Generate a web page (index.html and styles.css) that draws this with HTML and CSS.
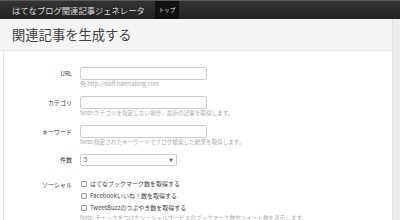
FILE: index.html
```html
<!DOCTYPE html>
<html lang="ja">
  <head>
    <meta charset="UTF-8" />
    <title>はてなブログ関連記事ジェネレータ</title>
    <link rel="stylesheet" href="styles.css">
  </head>
  <body>
    <div class="navbar">
      <a href="#" class="brand">はてなブログ関連記事ジェネレータ</a>
      <a href="#" class="nav-item active">トップ</a>
    </div>
    <div class="page">
      <div class="page-header">
        <h1>関連記事を生成する</h1>
      </div>
      <div class="content">
        <form class="form">
          <div class="form-row">
            <label class="form-label">URL</label>
            <div class="controls">
              <input type="text" class="text-input" />
              <p class="help">例:http://staff.hatenablog.com</p>
            </div>
          </div>
          <div class="form-row">
            <label class="form-label">カテゴリ</label>
            <div class="controls">
              <input type="text" class="text-input" />
              <p class="help">Note:カテゴリを指定しない場合、最新の記事を取得します。</p>
            </div>
          </div>
          <div class="form-row">
            <label class="form-label">キーワード</label>
            <div class="controls">
              <input type="text" class="text-input" />
              <p class="help">Note:指定されたキーワードでブログ検索した結果を取得します。</p>
            </div>
          </div>
          <div class="form-row row-select">
            <label class="form-label">件数</label>
            <div class="controls">
              <div class="select-wrap">
                <select class="select">
                  <option>5</option>
                  <option>10</option>
                </select>
                <span class="caret">▼</span>
              </div>
            </div>
          </div>
          <div class="form-row">
            <label class="form-label">ソーシャル</label>
            <div class="controls">
              <label class="check"><input type="checkbox" />はてなブックマーク数を取得する</label>
              <label class="check"><input type="checkbox" />Facebookいいね！数を取得する</label>
              <label class="check"><input type="checkbox" />TweetBuzzのつぶやき数を取得する</label>
              <p class="help">Note: チェックをつけたソーシャルサービスのブックマーク数やツイート数を表示します。</p>
            </div>
          </div>
        </form>
      </div>
    </div>
  </body>
</html>
```

FILE: styles.css
```css
body {
  margin: 0;
  font-family: "Noto Sans CJK JP", "Liberation Sans", sans-serif;
  color: #333;
  background-color: #eeeeee;
  overflow: hidden;
}
.navbar {
  display: flex;
  align-items: stretch;
  height: 19px;
  background: linear-gradient(#333, #222);
  border-top: 1px solid #5a5a5a;
  box-sizing: border-box;
  padding-left: 12px;
}
.brand {
  color: #ddd;
  text-decoration: none;
  font-size: 8.3px;
  line-height: 18px;
  margin-right: 10px;
}
.nav-item {
  color: #eee;
  text-decoration: none;
  font-size: 5.5px;
  line-height: 18px;
  padding: 0 4px;
}
.nav-item.active {
  background-color: #111;
}
.page {
  margin-right: 7px;
  background-color: #fff;
  border-right: 1px solid #e3e3e3;
  height: 201px;
}
.page-header {
  background-color: #f5f5f5;
  border-bottom: 1px solid #e6e6e6;
  height: 31px;
  padding-left: 12px;
  display: flex;
  align-items: center;
}
h1 {
  margin: 0;
  font-size: 13.3px;
  font-weight: normal;
  color: #404040;
}
.content {
  margin-left: 3px;
  border-left: 1px solid #e8e8e8;
  padding-top: 16px;
  height: 200px;
}
.form {
  display: flex;
  flex-direction: column;
  gap: 7px;
}
.form-row {
  display: grid;
  grid-template-columns: 68px 1fr;
  column-gap: 8px;
  align-items: start;
}
.form-label {
  text-align: right;
  font-size: 6px;
  line-height: 13px;
  color: #333;
}
.controls {
  display: flex;
  flex-direction: column;
}
.text-input {
  display: block;
  width: 127px;
  height: 13px;
  box-sizing: border-box;
  border: 1px solid #ccc;
  border-radius: 2px;
  margin: 0;
  padding: 0 3px;
}
.help {
  margin: 0;
  font-size: 5.6px;
  line-height: 9px;
  color: #aaa;
  white-space: nowrap;
}
.row-select {
  margin-bottom: 5px;
}
.row-select .form-label {
  line-height: 12px;
}
.select-wrap {
  position: relative;
  width: 97px;
  height: 12px;
}
.select {
  display: block;
  appearance: none;
  width: 97px;
  height: 12px;
  box-sizing: border-box;
  border: 1px solid #ccc;
  border-radius: 2px;
  background-color: #fff;
  font-family: inherit;
  font-size: 6px;
  line-height: 10px;
  color: #555;
  padding: 0 3px;
  margin: 0;
}
.caret {
  position: absolute;
  right: 4px;
  top: 0;
  font-size: 4px;
  line-height: 12px;
  color: #666;
}
.check {
  display: flex;
  align-items: center;
  font-size: 6px;
  line-height: 12px;
  height: 12px;
  color: #444;
}
.check input {
  appearance: none;
  width: 6px;
  height: 6px;
  margin: 0 3px 0 1px;
  border: 1px solid #999;
  border-radius: 1px;
  background-color: #f3f3f3;
  box-sizing: border-box;
}
```
